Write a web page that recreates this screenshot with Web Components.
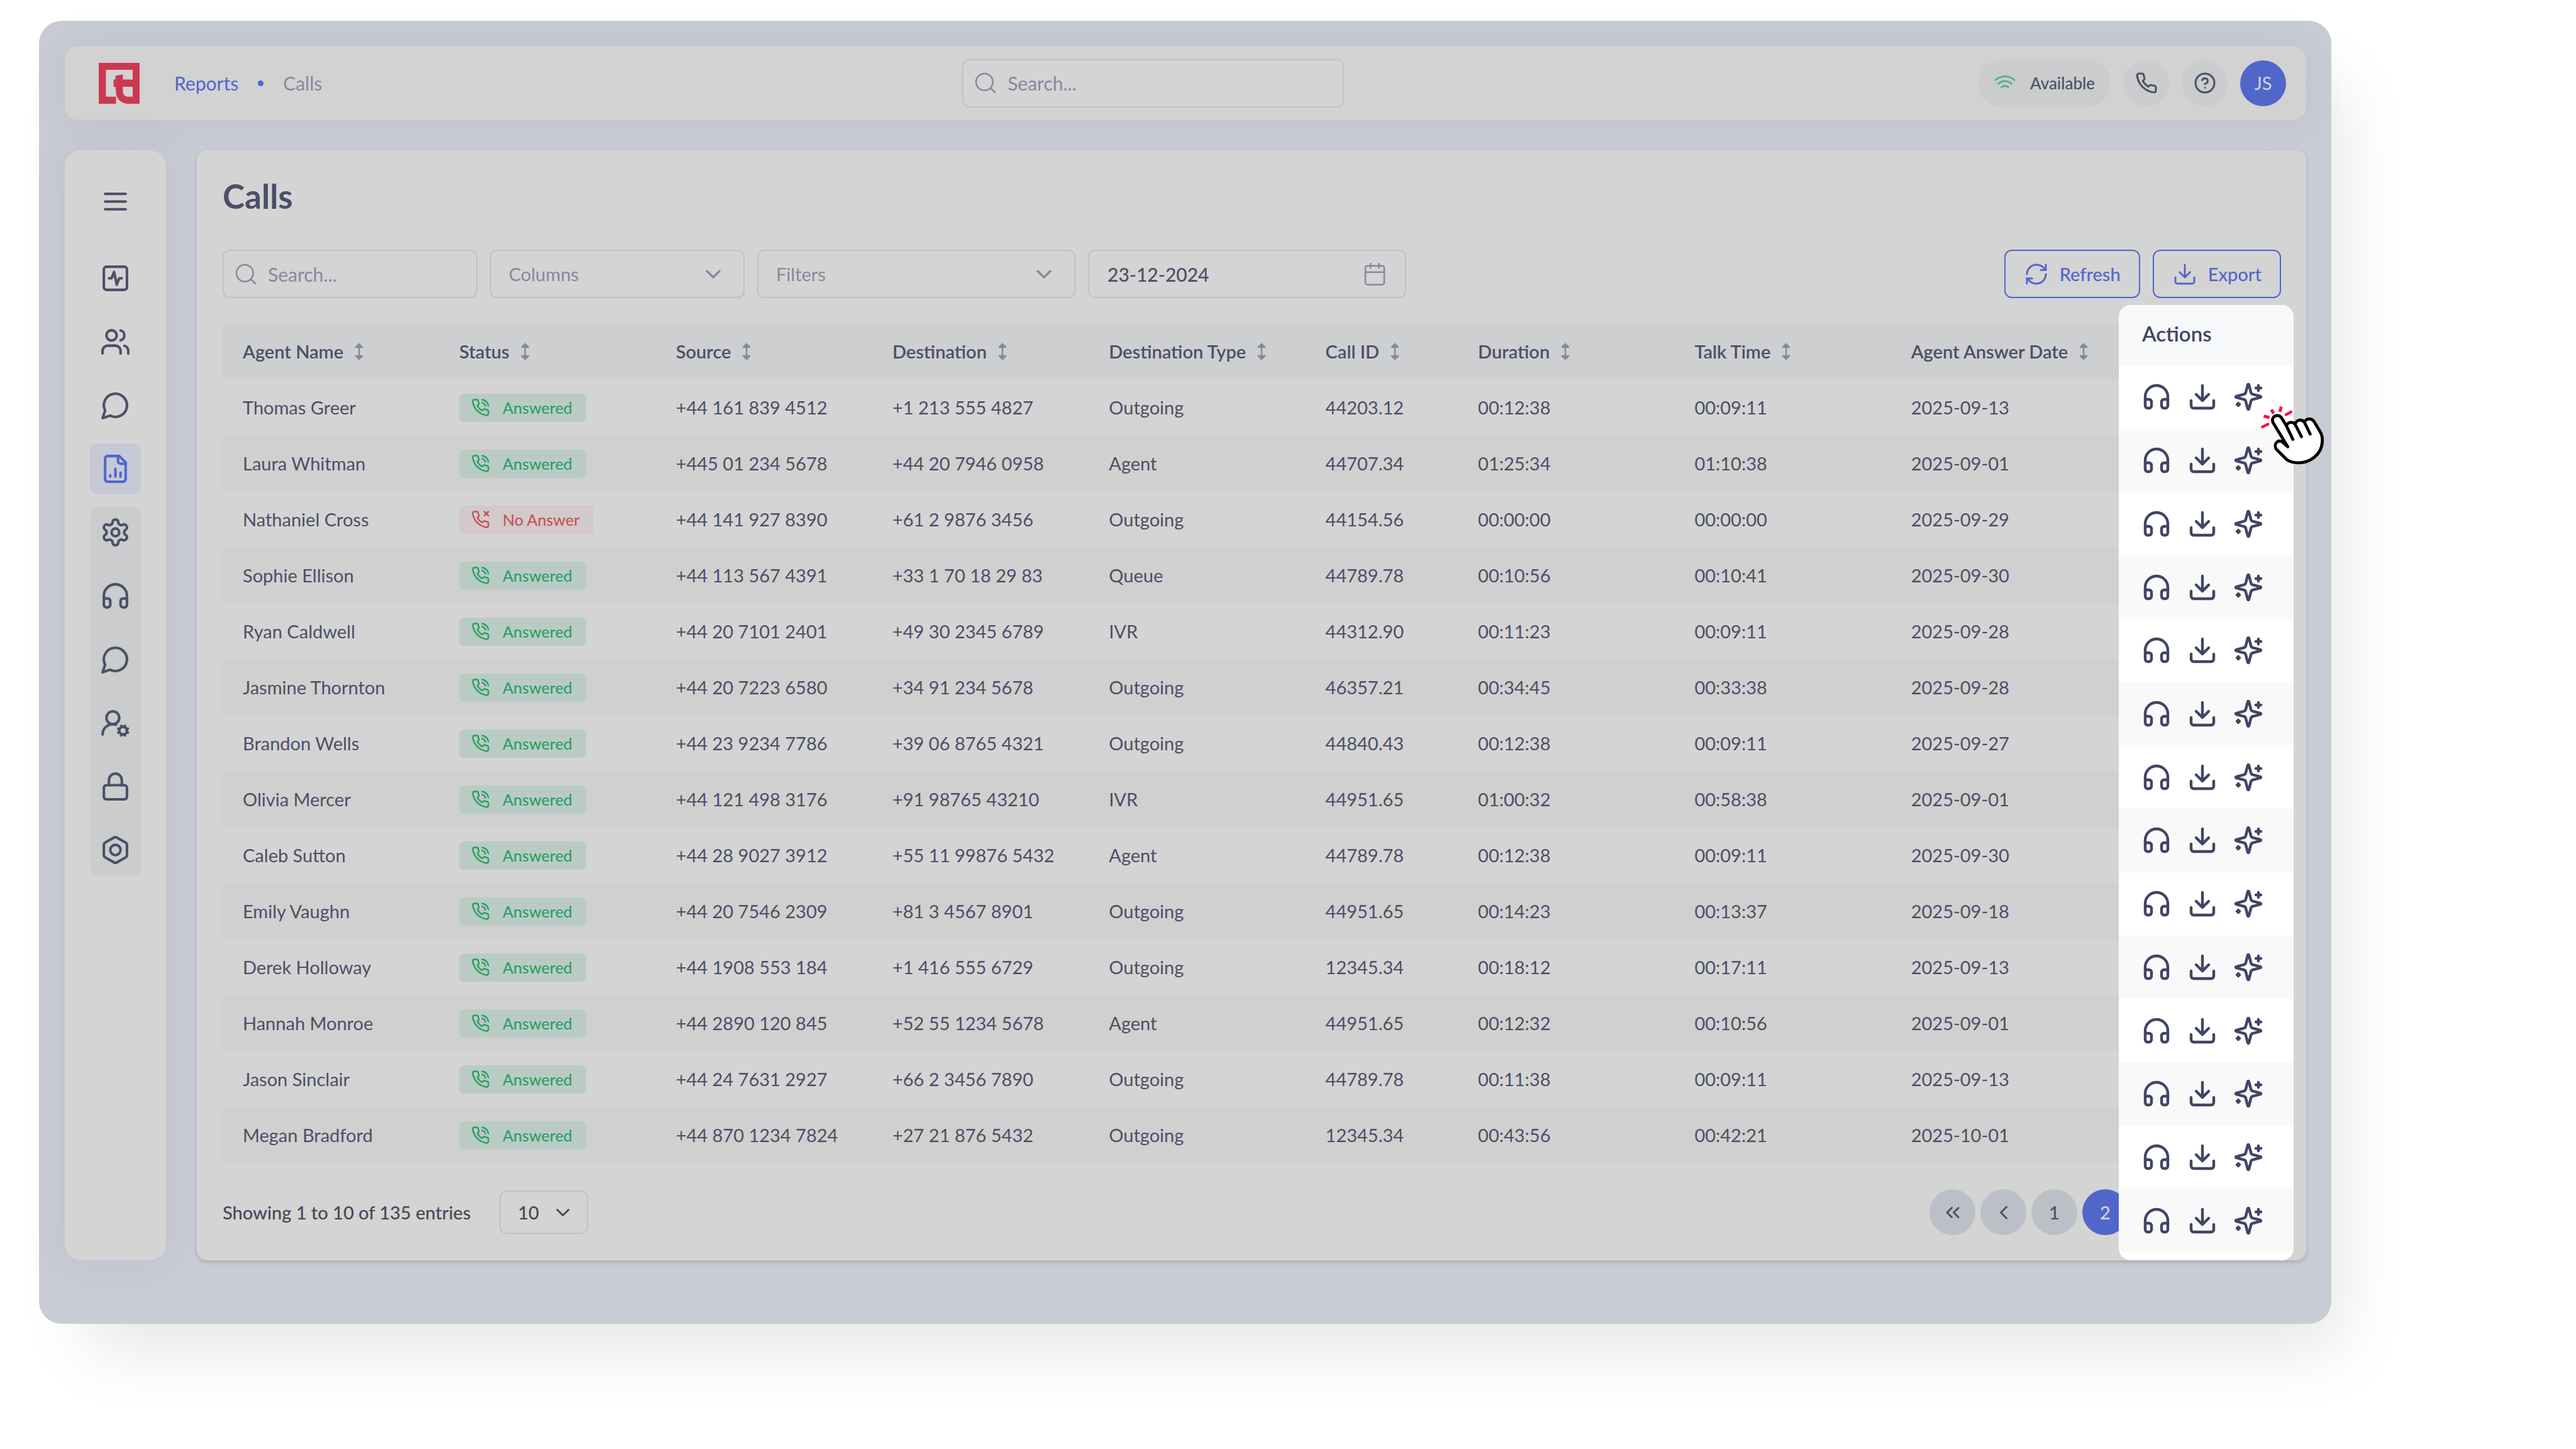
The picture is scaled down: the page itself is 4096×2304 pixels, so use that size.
<!DOCTYPE html>
<html lang="en">
<head>
<meta charset="utf-8">
<title>Calls</title>
<style>
  :root {
    --ink: #4c4f66;
    --muted: #85899d;
    --brand: #5166cb;
    --line: #bdc3ca;
    --surface: #d4d4d4;
    --font: Lato, "Noto Sans", sans-serif;
  }
  html { background: #fff; }
  body {
    box-sizing: border-box;
    min-height: 100vh;
    margin: 0;
    padding: 33px 389px 0 62px;
    font: 400 29px/40px var(--font);
    color: var(--ink);
  }
</style>
</head>
<body>
<app-window>
  <top-bar slot="top"></top-bar>
  <side-nav slot="side"></side-nav>
  <calls-page></calls-page>
</app-window>

<script>
const PHONE = '<path d="M22 16.92v3a2 2 0 0 1-2.18 2 19.79 19.79 0 0 1-8.63-3.07 19.5 19.5 0 0 1-6-6 19.79 19.79 0 0 1-3.07-8.67A2 2 0 0 1 4.11 2h3a2 2 0 0 1 2 1.72 12.84 12.84 0 0 0 .7 2.81 2 2 0 0 1-.45 2.11L8.09 9.91a16 16 0 0 0 6 6l1.27-1.27a2 2 0 0 1 2.11-.45 12.84 12.84 0 0 0 2.81.7A2 2 0 0 1 22 16.92z"/>';
const ICONS = {
  menu: '<path d="M4 6h16M4 12h16M4 18h16"/>',
  activity: '<rect x="3" y="3" width="18" height="18" rx="2"/><path d="M17 12h-2l-2 5-2-10-2 5H7"/>',
  users: '<path d="M16 21v-2a4 4 0 0 0-4-4H6a4 4 0 0 0-4 4v2"/><circle cx="9" cy="7" r="4"/><path d="M22 21v-2a4 4 0 0 0-3-3.87M16 3.13a4 4 0 0 1 0 7.75"/>',
  chat: '<path d="M7.9 20A9 9 0 1 0 4 16.1L2 22Z"/>',
  report: '<path d="M15 2H6a2 2 0 0 0-2 2v16a2 2 0 0 0 2 2h12a2 2 0 0 0 2-2V7Z"/><path d="M14 2v4a2 2 0 0 0 2 2h4M8 18v-1M12 18v-6M16 18v-3"/>',
  settings: '<path d="M12.22 2h-.44a2 2 0 0 0-2 2v.18a2 2 0 0 1-1 1.73l-.43.25a2 2 0 0 1-2 0l-.15-.08a2 2 0 0 0-2.73.73l-.22.38a2 2 0 0 0 .73 2.73l.15.1a2 2 0 0 1 1 1.72v.51a2 2 0 0 1-1 1.74l-.15.09a2 2 0 0 0-.73 2.73l.22.38a2 2 0 0 0 2.73.73l.15-.08a2 2 0 0 1 2 0l.43.25a2 2 0 0 1 1 1.73V20a2 2 0 0 0 2 2h.44a2 2 0 0 0 2-2v-.18a2 2 0 0 1 1-1.73l.43-.25a2 2 0 0 1 2 0l.15.08a2 2 0 0 0 2.73-.73l.22-.39a2 2 0 0 0-.73-2.73l-.15-.08a2 2 0 0 1-1-1.74v-.5a2 2 0 0 1 1-1.74l.15-.09a2 2 0 0 0 .73-2.73l-.22-.38a2 2 0 0 0-2.73-.73l-.15.08a2 2 0 0 1-2 0l-.43-.25a2 2 0 0 1-1-1.73V4a2 2 0 0 0-2-2z"/><circle cx="12" cy="12" r="3"/>',
  headphones: '<path d="M3 14h3a2 2 0 0 1 2 2v3a2 2 0 0 1-2 2H5a2 2 0 0 1-2-2v-7a9 9 0 0 1 18 0v7a2 2 0 0 1-2 2h-1a2 2 0 0 1-2-2v-3a2 2 0 0 1 2-2h3"/>',
  usercog: '<path d="M2 21a8 8 0 0 1 10.434-7.62"/><circle cx="10" cy="8" r="5"/><circle cx="18" cy="18" r="3"/><path d="m19.5 14.3-.4.9M16.9 20.8l-.4.9M21.7 19.5l-.9-.4M15.2 16.9l-.9-.4M21.7 16.5l-.9.4M15.2 19.1l-.9.4M19.5 21.7l-.4-.9M16.9 15.2l-.4-.9"/>',
  lock: '<rect x="3" y="11" width="18" height="11" rx="2"/><path d="M7 11V7a5 5 0 0 1 10 0v4"/>',
  bolt: '<path d="M21 16V8a2 2 0 0 0-1-1.73l-7-4a2 2 0 0 0-2 0l-7 4A2 2 0 0 0 3 8v8a2 2 0 0 0 1 1.73l7 4a2 2 0 0 0 2 0l7-4A2 2 0 0 0 21 16z"/><circle cx="12" cy="12" r="4"/>',
  search: '<circle cx="11" cy="11" r="8"/><path d="m21 21-4.3-4.3"/>',
  wifi: '<path d="M2 8.82a15 15 0 0 1 20 0M5 12.859a10 10 0 0 1 14 0M8.5 16.429a5 5 0 0 1 7 0"/><path d="M12 20h.01" opacity=".2"/>',
  phone: PHONE,
  answered: PHONE + '<path d="M14.05 2a9 9 0 0 1 8 7.94M14.05 6A5 5 0 0 1 18 10"/>',
  missed: PHONE + '<path d="m17 2 5 5M22 2l-5 5"/>',
  help: '<circle cx="12" cy="12" r="10"/><path d="M9.09 9a3 3 0 0 1 5.83 1c0 2-3 3-3 3M12 17h.01"/>',
  down: '<path d="m6 9 6 6 6-6"/>',
  calendar: '<rect x="3" y="4" width="18" height="18" rx="2"/><path d="M16 2v4M8 2v4M3 10h18"/>',
  refresh: '<path d="M3 12a9 9 0 0 1 9-9 9.75 9.75 0 0 1 6.74 2.74L21 8"/><path d="M21 3v5h-5M21 12a9 9 0 0 1-9 9 9.75 9.75 0 0 1-6.74-2.74L3 16"/><path d="M8 16H3v5"/>',
  download: '<path d="M12 15V3M7 10l5 5 5-5M21 15v4a2 2 0 0 1-2 2H5a2 2 0 0 1-2-2v-4"/>',
  sparkles: '<path d="M9.937 15.5A2 2 0 0 0 8.5 14.063l-6.135-1.582a.5.5 0 0 1 0-.962L8.5 9.936A2 2 0 0 0 9.937 8.5l1.582-6.135a.5.5 0 0 1 .963 0L14.063 8.5A2 2 0 0 0 15.5 9.937l6.135 1.581a.5.5 0 0 1 0 .964L15.5 14.063a2 2 0 0 0-1.437 1.437l-1.582 6.135a.5.5 0 0 1-.963 0z"/><path d="M20 3v4M22 5h-4M4 17v2M5 18H3"/>',
  first: '<path d="m11 17-5-5 5-5M18 17l-5-5 5-5"/>',
  prev: '<path d="m15 18-6-6 6-6"/>',
  sort: '<path d="M12 3v18"/><path fill="currentColor" d="M7.5 6 12 1.5 16.5 6ZM7.5 18l4.5 4.5 4.5-4.5Z"/>'
};

const define = (name, html, setup) => customElements.define(name, class extends HTMLElement {
  constructor() {
    super();
    const t = document.createElement('template');
    t.innerHTML = html;
    this.attachShadow({ mode: 'open' }).append(t.content.cloneNode(true));
  }
  connectedCallback() { if (setup) setup(this, this.shadowRoot); }
});

define('ui-icon', `
<style>
  :host { display: inline-block; flex: none; width: var(--icon, 40px); height: var(--icon, 40px); }
  svg { display: block; width: 100%; height: 100%; fill: none; stroke: currentColor; stroke-width: var(--stroke, 2); stroke-linecap: round; stroke-linejoin: round; overflow: visible; }
</style>
<svg viewBox="0 0 24 24" aria-hidden="true"></svg>`,
(el, root) => { root.querySelector('svg').innerHTML = ICONS[el.getAttribute('name')]; });

define('app-window', `
<style>
  :host {
    display: grid; grid-template-columns: 161px 1fr; gap: 48px 49px;
    padding: 40px 40px 101px 41px; border-radius: 36px;
    background: #c9ccd4;
    box-shadow: 45px 70px 110px -30px rgba(0,0,0,.1);
  }
  .top { grid-column: 1 / -1; }
  .top, .side, main { display: grid; min-width: 0; }
</style>
<div class="top"><slot name="top"></slot></div>
<div class="side"><slot name="side"></slot></div>
<main><slot></slot></main>`);

define('brand-logo', `
<style>:host { display: block; width: 65px; height: 65px; } svg { display: block; }</style>
<svg width="65" height="65" viewBox="0 0 65 65" aria-hidden="true"><path fill="#cb3852" fill-rule="evenodd" d="M0 0H65V65H44.6C36 64 27.4 57.5 27.4 45.8L26.6 38.1H23.5V26.5H26.6V20.4L38.4 18.3V26.5H54V11H11.4V53.7H27.4V65H0ZM38.4 38.1H54V53.7H46.6C41 53.7 38.4 50 38.4 44.3Z"/></svg>`);

define('search-field', `
<style>
  :host { display: block; font-size: 30px; }
  label { box-sizing: border-box; display: flex; align-items: center; gap: 15px; height: 77px; padding: 0 15px; border: 2px solid var(--line); border-radius: 11px; background: var(--surface); color: var(--muted); }
  input { flex: 1; min-width: 0; padding: 0; border: 0; outline: 0; background: none; font: inherit; color: inherit; }
  input::placeholder { color: inherit; opacity: 1; }
  ui-icon { --stroke: 1.5; }
</style>
<label><ui-icon name="search"></ui-icon><input type="search" placeholder="Search..." aria-label="Search..."></label>`);

define('top-bar', `
<style>
  :host { display: flex; align-items: center; justify-content: space-between; box-sizing: border-box; height: 118px; padding: 0 32px 0 54px; border-radius: 22px; background: #d2d2d2; box-shadow: 0 0 56px rgba(150,135,180,.2); }
  nav, .tools { display: flex; align-items: center; }
  nav { padding-right: 10px; font-size: 30px; }
  brand-logo { margin-right: 55px; }
  a { color: var(--brand); text-decoration: none; }
  i { width: 9px; height: 9px; margin: 0 31px; border-radius: 50%; background: var(--brand); }
  nav span { color: var(--muted); }
  search-field { width: 607px; }
  .tools { gap: 20px; --icon: 36px; }
  button { display: grid; place-items: center; width: 73px; height: 73px; padding: 0; border: 0; border-radius: 50%; background: #cacccd; color: var(--ink); font: inherit; }
  .pill { display: flex; justify-content: flex-start; width: auto; height: 75px; padding: 0 25px; gap: 22px; border-radius: 38px; font-size: 26px; font-weight: 500; }
  .pill ui-icon { color: #55b284; }
  .me { background: var(--brand); color: #d4d4d4; }
</style>
<nav><brand-logo></brand-logo><a href="#">Reports</a><i></i><span>Calls</span></nav>
<search-field></search-field>
<div class="tools">
  <button class="pill"><ui-icon name="wifi"></ui-icon>Available</button>
  <button aria-label="Phone"><ui-icon name="phone"></ui-icon></button>
  <button aria-label="Help"><ui-icon name="help"></ui-icon></button>
  <button class="me">JS</button>
</div>`);

define('side-nav', `
<style>
  :host { display: flex; flex-direction: column; align-items: center; padding-top: 41px; border-radius: 26px; background: var(--surface); box-shadow: 0 0 56px rgba(150,135,180,.2); --icon: 49px; }
  nav, .group { display: flex; flex-direction: column; gap: 20px; }
  button, a { display: grid; place-items: center; width: 81px; height: 81px; padding: 0; border: 0; border-radius: 12px; background: none; color: var(--ink); }
  button { margin-bottom: 41px; }
  .on { background: #c4c9d5; color: var(--brand); }
  .group { border-radius: 12px; background: #cacccd; }
</style>
<button aria-label="Menu"><ui-icon name="menu"></ui-icon></button>
<nav>
  <a href="#"><ui-icon name="activity"></ui-icon></a>
  <a href="#"><ui-icon name="users"></ui-icon></a>
  <a href="#"><ui-icon name="chat"></ui-icon></a>
  <a href="#" class="on"><ui-icon name="report"></ui-icon></a>
  <div class="group">
    <a href="#"><ui-icon name="settings"></ui-icon></a>
    <a href="#"><ui-icon name="headphones"></ui-icon></a>
    <a href="#"><ui-icon name="chat"></ui-icon></a>
    <a href="#"><ui-icon name="usercog"></ui-icon></a>
    <a href="#"><ui-icon name="lock"></ui-icon></a>
    <a href="#"><ui-icon name="bolt"></ui-icon></a>
  </div>
</nav>`);

define('select-field', `
<style>
  :host { display: grid; height: 77px; color: var(--muted); }
  select, ui-icon { grid-area: 1 / 1; }
  select { appearance: none; box-sizing: border-box; width: 100%; height: 100%; padding: 0 28px; border: 2px solid var(--line); border-radius: 11px; background: none; font: inherit; color: inherit; }
  ui-icon { place-self: center end; margin-right: var(--inset, 30px); pointer-events: none; }
</style>
<select></select><ui-icon name="down"></ui-icon>`,
(el, root) => {
  const s = root.querySelector('select');
  s.setAttribute('aria-label', el.getAttribute('label'));
  s.add(new Option(el.getAttribute('label')));
});

define('date-field', `
<style>
  :host { display: block; }
  label { box-sizing: border-box; display: flex; align-items: center; height: 77px; padding: 0 28px 0 29px; border: 2px solid var(--line); border-radius: 11px; color: var(--muted); }
  input { flex: 1; min-width: 0; padding: 0; border: 0; outline: 0; background: none; font: inherit; font-size: 30px; font-weight: 500; color: var(--ink); }
  ui-icon { --stroke: 1.5; }
</style>
<label><input type="text" value="23-12-2024" aria-label="Date"><ui-icon name="calendar"></ui-icon></label>`);

define('status-badge', `
<style>
  :host { display: inline-flex; align-items: center; gap: 20px; box-sizing: border-box; height: 45px; padding: 0 22px 0 19px; border-radius: 7px; background: #bacbc6; color: #2ba063; font-size: 25px; font-weight: 500; line-height: 45px; vertical-align: middle; --icon: 30px; }
  :host([missed]) { background: #d2caca; color: #ca5158; }
  .no, :host([missed]) .yes { display: none; }
  :host([missed]) .no { display: inline-block; }
</style>
<ui-icon class="yes" name="answered"></ui-icon><ui-icon class="no" name="missed"></ui-icon><slot></slot>`);

const HEADERS = ['Agent Name', 'Status', 'Source', 'Destination', 'Destination Type', 'Call ID', 'Duration', 'Talk Time', 'Agent Answer Date'];
const CALLS = `Thomas Greer|+44 161 839 4512|+1 213 555 4827|Outgoing|44203.12|00:12:38|00:09:11|2025-09-13
Laura Whitman|+445 01 234 5678|+44 20 7946 0958|Agent|44707.34|01:25:34|01:10:38|2025-09-01
Nathaniel Cross|+44 141 927 8390|+61 2 9876 3456|Outgoing|44154.56|00:00:00|00:00:00|2025-09-29
Sophie Ellison|+44 113 567 4391|+33 1 70 18 29 83|Queue|44789.78|00:10:56|00:10:41|2025-09-30
Ryan Caldwell|+44 20 7101 2401|+49 30 2345 6789|IVR|44312.90|00:11:23|00:09:11|2025-09-28
Jasmine Thornton|+44 20 7223 6580|+34 91 234 5678|Outgoing|46357.21|00:34:45|00:33:38|2025-09-28
Brandon Wells|+44 23 9234 7786|+39 06 8765 4321|Outgoing|44840.43|00:12:38|00:09:11|2025-09-27
Olivia Mercer|+44 121 498 3176|+91 98765 43210|IVR|44951.65|01:00:32|00:58:38|2025-09-01
Caleb Sutton|+44 28 9027 3912|+55 11 99876 5432|Agent|44789.78|00:12:38|00:09:11|2025-09-30
Emily Vaughn|+44 20 7546 2309|+81 3 4567 8901|Outgoing|44951.65|00:14:23|00:13:37|2025-09-18
Derek Holloway|+44 1908 553 184|+1 416 555 6729|Outgoing|12345.34|00:18:12|00:17:11|2025-09-13
Hannah Monroe|+44 2890 120 845|+52 55 1234 5678|Agent|44951.65|00:12:32|00:10:56|2025-09-01
Jason Sinclair|+44 24 7631 2927|+66 2 3456 7890|Outgoing|44789.78|00:11:38|00:09:11|2025-09-13
Megan Bradford|+44 870 1234 7824|+27 21 876 5432|Outgoing|12345.34|00:43:56|00:42:21|2025-10-01`.split('\n').map(r => r.split('|'));

define('calls-table', `
<style>
  :host { display: block; }
  table { width: 100%; table-layout: fixed; border-collapse: collapse; }
  col { width: 10.52%; }
  col.id { width: 7.41%; }
  col.rest { width: auto; }
  th, td { height: 89px; padding: 0 0 0 32px; text-align: left; white-space: nowrap; vertical-align: middle; font-weight: 400; }
  th { background: #cdcfd1; }
  th span { display: flex; align-items: center; gap: 11px; font-weight: 600; }
  th ui-icon { --icon: 28px; color: var(--muted); }
  tbody tr:nth-child(even) { background: #d0d0d0; }
</style>
<table>
  <colgroup><col span="5"><col class="id"><col span="2"><col class="rest"></colgroup>
  <thead><tr></tr></thead><tbody></tbody>
</table>`,
(el, root) => {
  root.querySelector('thead tr').innerHTML = HEADERS.map(h => `<th scope="col"><span>${h}<ui-icon name="sort"></ui-icon></span></th>`).join('');
  root.querySelector('tbody').innerHTML = CALLS.map((c, i) => {
    const badge = i === 2 ? '<status-badge missed>No Answer</status-badge>' : '<status-badge>Answered</status-badge>';
    return `<tr><td>${c[0]}</td><td>${badge}</td>${c.slice(1).map(v => `<td>${v}</td>`).join('')}</tr>`;
  }).join('');
});

define('actions-panel', `
<style>
  :host { display: flex; flex-direction: column; box-sizing: border-box; padding-bottom: 13px; border-radius: 19px; overflow: hidden; background: #fff; color: #414563; --icon: 48px; --stroke: 2.2; }
  h2 { box-sizing: border-box; height: 96px; margin: 0; padding: 0 37px 6px; font-size: 33px; font-weight: 600; line-height: 90px; background: #f7f8fa; }
  .rows { flex: 1; display: flex; flex-direction: column; }
  .row { flex: 1; display: flex; align-items: center; gap: 25px; padding-left: 36px; }
  .row:nth-child(even) { background: #f9f9f9; }
  button { padding: 0; border: 0; background: none; color: inherit; display: grid; }
</style>
<h2>Actions</h2><div class="rows"></div>`,
(el, root) => {
  root.querySelector('.rows').innerHTML = CALLS.map(() => '<div class="row">' +
    [['Listen', 'headphones'], ['Download', 'download'], ['Summarise', 'sparkles']]
      .map(([l, n]) => `<button aria-label="${l}"><ui-icon name="${n}"></ui-icon></button>`).join('') + '</div>').join('');
});

define('click-pointer', `
<style>:host { display: block; width: 102px; height: 96px; pointer-events: none; } svg { display: block; overflow: visible; }</style>
<svg width="102" height="96" viewBox="0 0 102 96" fill="none" stroke="#000" stroke-width="4.8" stroke-linecap="round" stroke-linejoin="round" aria-hidden="true">
  <path fill="#fff" d="M43.7 66.4 20.6 28.5C17.8 23.6 20 18.5 24.6 17 28.6 15.8 32.2 17.6 34.5 21.5L41.5 33C42.5 29.5 46 27.5 49.5 27.7 52 27.8 54 29 55.3 30.5 56.3 26.5 60 23.8 64 24 67 24.2 69 25.5 70.3 27.5 71.5 23.8 75 21.9 78.5 22.2 82 22.4 84.5 24.5 86.3 27.5L95.5 43C98 47.3 99 53 98.6 58.5 98 68.5 93.5 77 86 82.8 79 88.6 70 91.8 60.5 91.8 52 91.8 46.8 90.3 41.5 86.3L26.7 71.5C23.4 68.3 22.9 63.5 25.3 60.2 28.2 56.6 32 56.6 35.5 59Z"/>
  <path d="M41.5 33 51.8 54.6M55.8 31.5 65.5 50.3M70.8 28.5 79.3 46.2"/>
  <path stroke="#ff0c46" stroke-width="4.4" d="M41 15.2 49 11M3.5 34.8 12.3 30.6"/>
  <path stroke="#ff0c46" stroke-width="4.8" stroke-linecap="butt" d="M5.5 17.6 14.6 19.9M17.4 7.3 21.5 13.4M33.4 2.6 31.2 10.8"/>
</svg>`);

define('calls-page', `
<style>
  :host { position: relative; display: flex; flex-direction: column; padding: 40px 40px 40px 41px; border-radius: 16px; background: var(--surface); box-shadow: 0 3px 6px rgba(0,0,0,.16); }
  h1 { margin: 0 0 52px; font-size: 53px; font-weight: 700; line-height: 66px; }
  .bar { display: flex; gap: 20px; margin-bottom: 40px; }
  .bar > * { width: 405px; }
  .bar .wide { width: 506px; }
  .bar button { box-sizing: border-box; width: auto; height: 77px; display: flex; align-items: center; gap: 17px; padding: 0 29px; border: 2px solid var(--brand); border-radius: 12px; background: none; color: var(--brand); font: inherit; font-weight: 500; --stroke: 1.75; }
  .push { margin-left: auto; }
  footer { display: flex; align-items: center; margin-top: 42px; color: #434956; font-weight: 500; }
  select-field { font: inherit; }
  footer select-field { width: 141px; height: 69px; margin-left: 45px; color: inherit; --icon: 36px; --inset: 22px; }
  .pages { display: flex; gap: 8px; margin: 0 243px 0 auto; --icon: 36px; }
  .pages button { display: grid; place-items: center; width: 73px; height: 73px; padding: 0; border: 0; border-radius: 50%; background: #bbc0c6; color: var(--ink); font: inherit; }
  .pages .on { background: var(--brand); color: #d4d4d4; }
  actions-panel { position: absolute; top: 246px; right: 20px; bottom: 0; width: 278px; }
  click-pointer { position: absolute; top: 405px; right: -29px; }
</style>
<h1>Calls</h1>
<div class="bar">
  <search-field></search-field>
  <select-field label="Columns"></select-field>
  <select-field class="wide" label="Filters"></select-field>
  <date-field class="wide"></date-field>
  <button class="push"><ui-icon name="refresh"></ui-icon>Refresh</button>
  <button><ui-icon name="download"></ui-icon>Export</button>
</div>
<calls-table></calls-table>
<footer>
  <span>Showing 1 to 10 of 135 entries</span>
  <select-field label="10"></select-field>
  <div class="pages">
    <button aria-label="First"><ui-icon name="first"></ui-icon></button>
    <button aria-label="Previous"><ui-icon name="prev"></ui-icon></button>
    <button>1</button>
    <button class="on">2</button>
  </div>
</footer>
<actions-panel></actions-panel>
<click-pointer></click-pointer>`);
</script>
</body>
</html>
